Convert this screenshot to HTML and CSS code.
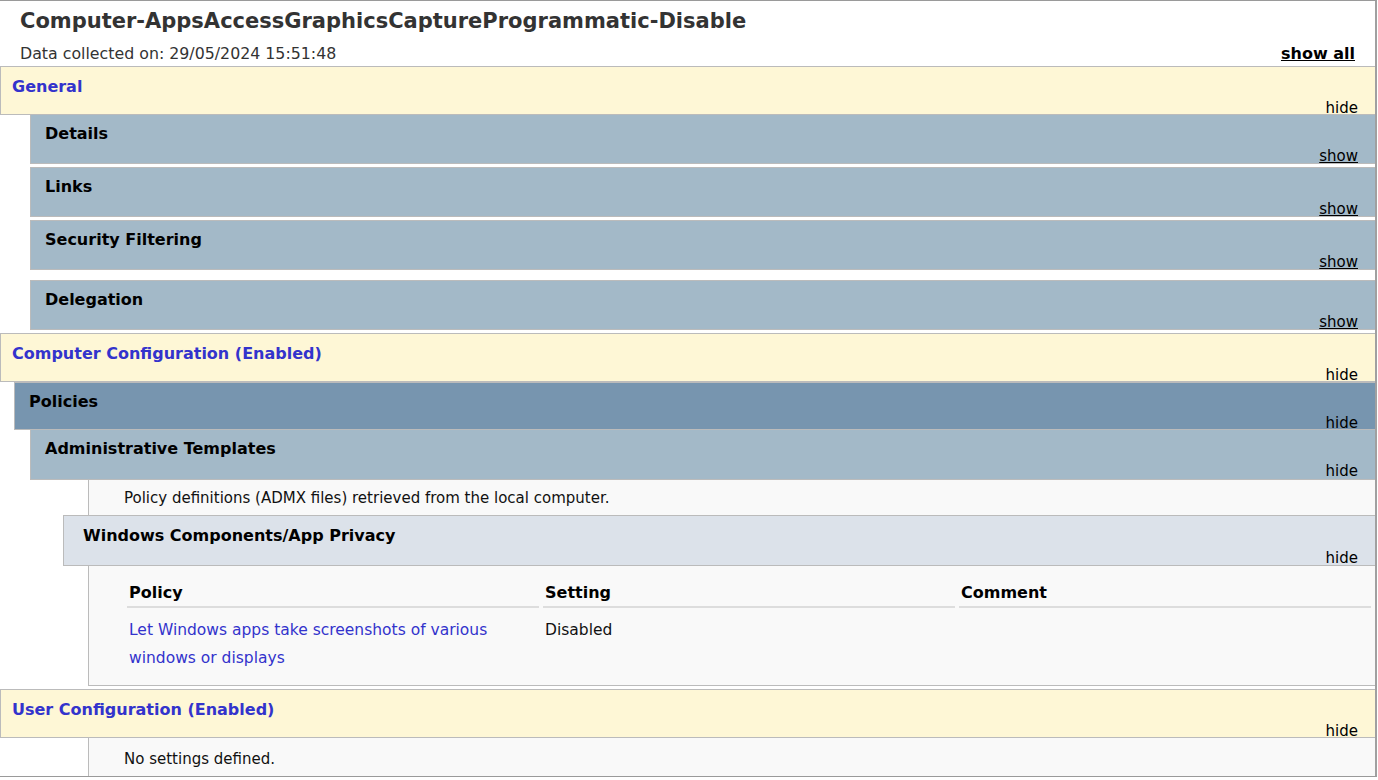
FILE: index.html
```html
<!DOCTYPE html>
<html lang="en">
<head>
<meta charset="utf-8">
<title>Computer-AppsAccessGraphicsCaptureProgrammatic-Disable</title>
<link rel="stylesheet" href="styles.css">
</head>
<body>
<div class="report">
  <div class="title">
    <div class="title-name">Computer-AppsAccessGraphicsCaptureProgrammatic-Disable</div>
    <div class="title-row">
      <span class="collected">Data collected on: 29/05/2024 15:51:48</span>
      <a class="showall">show all</a>
    </div>
  </div>

  <div class="hdr he0">
    <span class="hdr-title">General</span>
    <a class="hdr-link">hide</a>
  </div>
  <div class="hdr he1 first">
    <span class="hdr-title">Details</span>
    <a class="hdr-link show">show</a>
  </div>
  <div class="hdr he1 gap">
    <span class="hdr-title">Links</span>
    <a class="hdr-link show">show</a>
  </div>
  <div class="hdr he1 gap">
    <span class="hdr-title">Security Filtering</span>
    <a class="hdr-link show">show</a>
  </div>
  <div class="hdr he1 gap-wide">
    <span class="hdr-title">Delegation</span>
    <a class="hdr-link show">show</a>
  </div>

  <div class="hdr he0 gap">
    <span class="hdr-title">Computer Configuration (Enabled)</span>
    <a class="hdr-link">hide</a>
  </div>
  <div class="hdr he1h">
    <span class="hdr-title">Policies</span>
    <a class="hdr-link">hide</a>
  </div>
  <div class="hdr he1 admin">
    <span class="hdr-title">Administrative Templates</span>
    <a class="hdr-link">hide</a>
  </div>
  <div class="info">Policy definitions (ADMX files) retrieved from the local computer.</div>
  <div class="hdr he4">
    <span class="hdr-title">Windows Components/App Privacy</span>
    <a class="hdr-link">hide</a>
  </div>
  <div class="tbox">
    <table class="policy-table">
      <thead>
        <tr><th>Policy</th><th>Setting</th><th>Comment</th></tr>
      </thead>
      <tbody>
        <tr>
          <td><a class="plink">Let Windows apps take screenshots of various windows or displays</a></td>
          <td>Disabled</td>
          <td></td>
        </tr>
      </tbody>
    </table>
  </div>

  <div class="hdr he0 gap">
    <span class="hdr-title">User Configuration (Enabled)</span>
    <a class="hdr-link">hide</a>
  </div>
  <div class="info last">No settings defined.</div>
</div>
</body>
</html>
```

FILE: styles.css
```css
html, body {
  margin: 0;
  padding: 0;
  background: #ffffff;
}

body {
  font-family: "DejaVu Sans", Verdana, sans-serif;
  font-size: 15px;
  color: #000000;
}

.report {
  width: 1375px;
  border-top: 1px solid #9a9a9a;
  border-right: 2px solid #a0a0a0;
  border-bottom: 1px solid #9a9a9a;
}

/* Title */
.title {
  box-sizing: border-box;
  height: 65px;
  padding: 8px 20px 0 20px;
}

.title-name {
  font-weight: bold;
  font-size: 21px;
  line-height: 24px;
  color: #333333;
}

.title-row {
  display: flex;
  justify-content: space-between;
  align-items: center;
  height: 20px;
  margin-top: 10px;
}

.collected {
  font-size: 15.8px;
  color: #333333;
}

.showall {
  font-weight: bold;
  font-size: 16px;
  color: #000000;
  text-decoration: underline;
}

/* Section headers */
.hdr {
  box-sizing: border-box;
  display: flex;
  flex-direction: column;
  border: 1px solid #bbbbbb;
  border-right: none;
  padding: 9px 17px 0 14px;
}

.hdr-title {
  font-weight: bold;
  font-size: 16px;
  line-height: 20px;
}

.hdr-link {
  margin-top: auto;
  margin-bottom: -1px;
  align-self: flex-end;
  font-size: 15px;
  line-height: 16px;
  color: #000000;
}

.hdr-link.show {
  text-decoration: underline;
}

.he0 {
  height: 49px;
  padding-top: 10px;
  padding-left: 11px;
  background: #fef7d6;
}

.he0 .hdr-link {
  margin-bottom: -2px;
}

.he0 .hdr-title {
  color: #3333cc;
}

.he1 {
  height: 50px;
  margin-left: 30px;
  background: #a3b9c8;
}

.he1.first {
  margin-top: -1px;
}

.he1.admin {
  height: 51px;
  margin-top: -1px;
}

.he1.admin .hdr-link {
  margin-bottom: 0;
}

.he1h {
  height: 48px;
  margin-left: 14px;
  background: #7795af;
}

.he1h .hdr-link {
  margin-bottom: -2px;
}

.he4 {
  height: 51px;
  margin-top: -1px;
  margin-left: 63px;
  padding-top: 10px;
  padding-left: 19px;
  background: #dce2ea;
}

.gap {
  margin-top: 3px;
}

.gap-wide {
  margin-top: 10px;
}

/* Info rows */
.info {
  box-sizing: border-box;
  display: flex;
  align-items: center;
  height: 36px;
  margin-left: 88px;
  padding-left: 35px;
  padding-top: 1px;
  border-left: 1px solid #bbbbbb;
  border-bottom: 1px solid #bbbbbb;
  background: #f9f9f9;
  font-size: 15px;
  color: #111111;
}

.info.last {
  height: 38px;
  padding-top: 3px;
  border-bottom: none;
}

/* Policy table */
.tbox {
  box-sizing: border-box;
  height: 120px;
  margin-left: 88px;
  padding-top: 11px;
  border-left: 1px solid #bbbbbb;
  border-bottom: 1px solid #bbbbbb;
  background: #f9f9f9;
}

.policy-table {
  width: calc(100% - 34px);
  margin-left: 34px;
  table-layout: fixed;
  border-collapse: separate;
  border-spacing: 4px;
}

.policy-table th {
  padding: 0 2px 1px 2px;
  border-bottom: 2px solid #dddddd;
  font-weight: bold;
  font-size: 16px;
  line-height: 24px;
  text-align: left;
  vertical-align: top;
}

.policy-table td {
  padding: 4px 2px 0 2px;
  font-size: 15.5px;
  line-height: 28px;
  text-align: left;
  vertical-align: top;
  color: #111111;
}

.plink {
  color: #3333cc;
}
```
